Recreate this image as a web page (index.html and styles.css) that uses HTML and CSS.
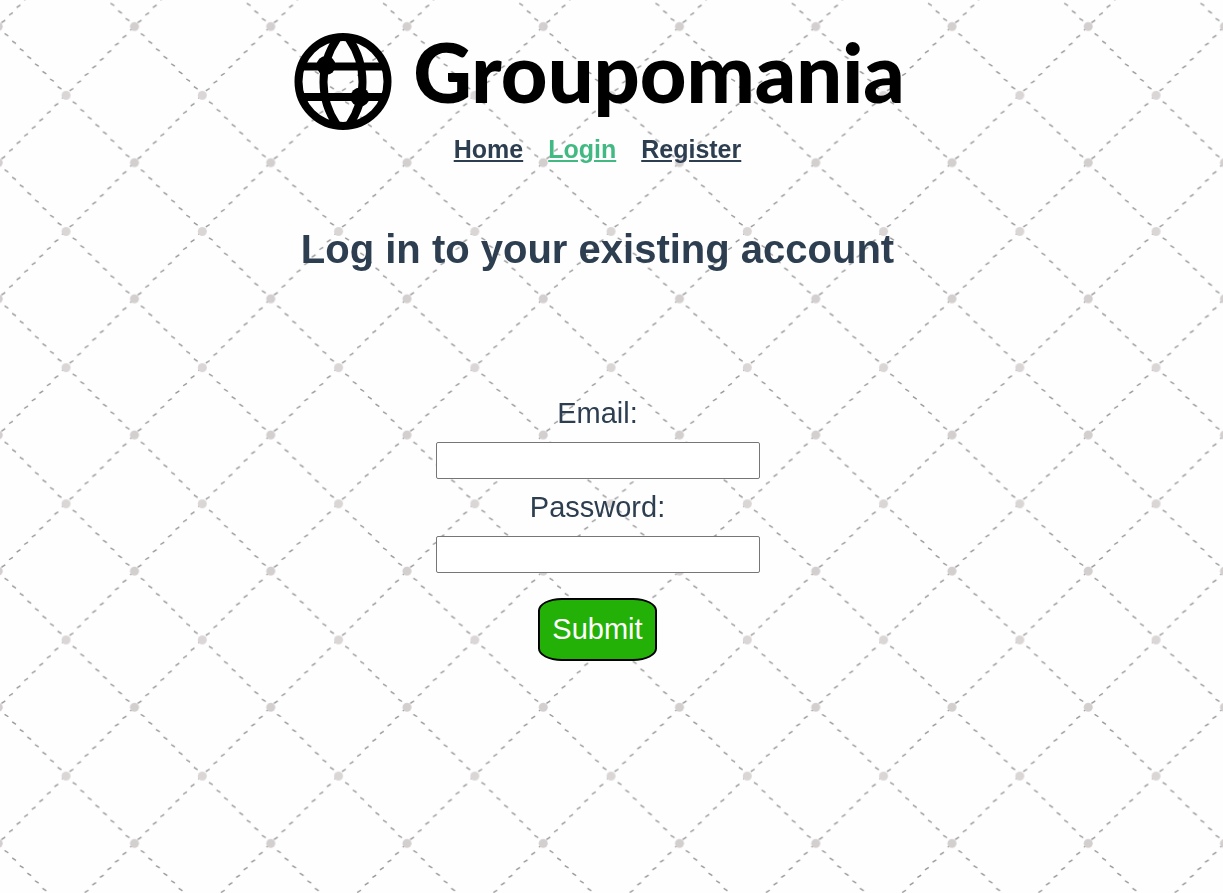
FILE: index.html
```html
<!DOCTYPE html>
<html lang="en">
<head>
<meta charset="utf-8">
<title>Groupomania</title>
<link rel="stylesheet" href="styles.css">
</head>
<body>
<svg class="backdrop" aria-hidden="true">
  <defs>
    <pattern id="lattice" x="100.5" y="-7.5" width="136.25" height="136.15" patternUnits="userSpaceOnUse">
      <g fill="none" stroke="#989898" stroke-width="1.4">
        <path d="M2.5 3.2l3.8 2.4m3.77 5.17l3.8 2.4m3.77 5.17l3.8 2.4m3.77 5.17l3.8 2.4m3.77 5.17l3.8 2.4m3.77 5.17l3.8 2.4m3.77 5.17l3.8 2.4m3.77 5.17l3.8 2.4m3.77 5.17l3.8 2.4m3.77 5.17l3.8 2.4m3.77 5.17l3.8 2.4m3.77 5.17l3.8 2.4m3.77 5.17l3.8 2.4m3.77 5.17l3.8 2.4m3.77 5.17l3.8 2.4m3.77 5.17l3.8 2.4m3.77 5.17l3.8 2.4m3.77 5.17l3.8 2.4"/>
        <path id="fall" d="M71.3 -2.5l-3.8 2.4m-3.77 5.17l-3.8 2.4m-3.77 5.17l-3.8 2.4m-3.77 5.17l-3.8 2.4m-3.77 5.17l-3.8 2.4m-3.77 5.17l-3.8 2.4m-3.77 5.17l-3.8 2.4m-3.77 5.17l-3.8 2.4m-3.77 5.17l-3.8 2.4m-3.77 5.17l-3.8 2.4"/>
        <use href="#fall" x="68.1" y="68.1"/>
      </g>
      <circle cx="34" cy="34" r="4.5" fill="#d3cfcf"/>
      <circle cx="101.8" cy="102.8" r="4.5" fill="#dad6d6"/>
    </pattern>
  </defs>
  <rect width="100%" height="100%" fill="url(#lattice)"/>
</svg>
<div class="app">
  <header class="header">
    <div class="brand">
      <svg class="globe" viewBox="0 0 98 98" aria-hidden="true">
        <g fill="none" stroke="#000" stroke-width="8">
          <circle cx="49" cy="48.5" r="44.5"/>
          <path d="M8 33.5H90M8 64H90M43 6C25 32 25 66 43 92M55 6C73 32 73 66 55 92"/>
        </g>
        <circle cx="32" cy="32.5" r="9.5"/>
        <circle cx="66" cy="64" r="9.5"/>
      </svg>
      <span class="wordmark">Groupomania</span>
    </div>
    <nav class="nav">
      <a href="#home">Home</a>
      <a href="#login" class="active">Login</a>
      <a href="#register">Register</a>
    </nav>
  </header>
  <main>
    <h1 class="title">Log in to your existing account</h1>
    <form class="form">
      <label for="email">Email:</label>
      <input id="email" type="email">
      <label for="password">Password:</label>
      <input id="password" type="password">
      <button type="submit">Submit</button>
    </form>
  </main>
</div>
</body>
</html>
```
FILE: styles.css
```css
* { box-sizing: border-box; }
body {
  margin: 0;
  background: #fefefe;
  color: #2c3e50;
  font-family: "Liberation Sans", Arial, sans-serif;
}
.backdrop {
  position: fixed;
  inset: 0;
  z-index: -1;
  width: 100%;
  height: 100%;
}
.app {
  padding: 33px 28px 0 0;
}
.brand {
  display: flex;
  justify-content: center;
  gap: 21px;
  height: 98px;
  padding-left: 4px;
  color: #000;
}
.globe {
  width: 98px;
  height: 98px;
}
.wordmark {
  font-family: Lato, sans-serif;
  font-size: 81px;
  font-weight: 900;
  line-height: 78px;
}
.nav {
  display: flex;
  justify-content: center;
  gap: 25px;
  margin-top: 4px;
  font-size: 25px;
  font-weight: 700;
  line-height: 28px;
}
.nav a { color: #2c3e50; }
.nav .active { color: #42b983; }
.title {
  margin: 63px 0 0;
  font-size: 40px;
  line-height: 46px;
  text-align: center;
}
.form {
  display: flex;
  flex-direction: column;
  align-items: center;
  margin-top: 125px;
  font-size: 29px;
}
.form label { line-height: 33px; }
.form input {
  width: 324px;
  max-width: 100%;
  height: 37px;
  margin: 12px 0;
  padding: 1px 4px;
  border: 1px solid #767676;
  border-radius: 2px;
  background: #fff;
  font: inherit;
}
.form button {
  margin-top: 13px;
  padding: 13px 12px;
  border: 2px solid #000;
  border-radius: 20%;
  background: #24b107;
  color: #fff;
  font: inherit;
  line-height: 33px;
}
```
